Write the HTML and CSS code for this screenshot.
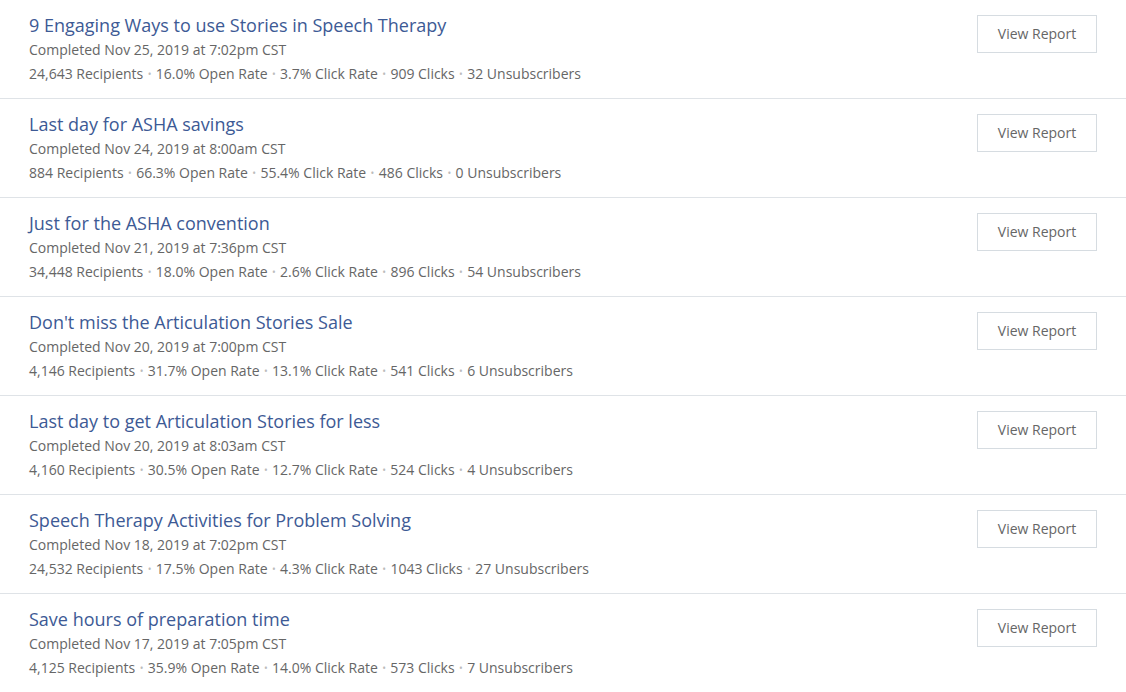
FILE: index.html
```html
<!DOCTYPE html>
<html>
<head>
<meta charset="utf-8">
<link rel="stylesheet" href="styles.css">
</head>
<body>
<ul class="list">
  <li class="row">
    <div class="info">
      <a class="title" href="#">9 Engaging Ways to use Stories in Speech Therapy</a>
      <div class="meta date">Completed Nov 25, 2019 at 7:02pm CST</div>
      <div class="meta stats"><span>24,643 Recipients</span><span class="dot">•</span><span>16.0% Open Rate</span><span class="dot">•</span><span>3.7% Click Rate</span><span class="dot">•</span><span>909 Clicks</span><span class="dot">•</span><span>32 Unsubscribers</span></div>
    </div>
    <button class="btn">View Report</button>
  </li>
  <li class="row">
    <div class="info">
      <a class="title" href="#">Last day for ASHA savings</a>
      <div class="meta date">Completed Nov 24, 2019 at 8:00am CST</div>
      <div class="meta stats"><span>884 Recipients</span><span class="dot">•</span><span>66.3% Open Rate</span><span class="dot">•</span><span>55.4% Click Rate</span><span class="dot">•</span><span>486 Clicks</span><span class="dot">•</span><span>0 Unsubscribers</span></div>
    </div>
    <button class="btn">View Report</button>
  </li>
  <li class="row">
    <div class="info">
      <a class="title" href="#">Just for the ASHA convention</a>
      <div class="meta date">Completed Nov 21, 2019 at 7:36pm CST</div>
      <div class="meta stats"><span>34,448 Recipients</span><span class="dot">•</span><span>18.0% Open Rate</span><span class="dot">•</span><span>2.6% Click Rate</span><span class="dot">•</span><span>896 Clicks</span><span class="dot">•</span><span>54 Unsubscribers</span></div>
    </div>
    <button class="btn">View Report</button>
  </li>
  <li class="row">
    <div class="info">
      <a class="title" href="#">Don't miss the Articulation Stories Sale</a>
      <div class="meta date">Completed Nov 20, 2019 at 7:00pm CST</div>
      <div class="meta stats"><span>4,146 Recipients</span><span class="dot">•</span><span>31.7% Open Rate</span><span class="dot">•</span><span>13.1% Click Rate</span><span class="dot">•</span><span>541 Clicks</span><span class="dot">•</span><span>6 Unsubscribers</span></div>
    </div>
    <button class="btn">View Report</button>
  </li>
  <li class="row">
    <div class="info">
      <a class="title" href="#">Last day to get Articulation Stories for less</a>
      <div class="meta date">Completed Nov 20, 2019 at 8:03am CST</div>
      <div class="meta stats"><span>4,160 Recipients</span><span class="dot">•</span><span>30.5% Open Rate</span><span class="dot">•</span><span>12.7% Click Rate</span><span class="dot">•</span><span>524 Clicks</span><span class="dot">•</span><span>4 Unsubscribers</span></div>
    </div>
    <button class="btn">View Report</button>
  </li>
  <li class="row">
    <div class="info">
      <a class="title" href="#">Speech Therapy Activities for Problem Solving</a>
      <div class="meta date">Completed Nov 18, 2019 at 7:02pm CST</div>
      <div class="meta stats"><span>24,532 Recipients</span><span class="dot">•</span><span>17.5% Open Rate</span><span class="dot">•</span><span>4.3% Click Rate</span><span class="dot">•</span><span>1043 Clicks</span><span class="dot">•</span><span>27 Unsubscribers</span></div>
    </div>
    <button class="btn">View Report</button>
  </li>
  <li class="row">
    <div class="info">
      <a class="title" href="#">Save hours of preparation time</a>
      <div class="meta date">Completed Nov 17, 2019 at 7:05pm CST</div>
      <div class="meta stats"><span>4,125 Recipients</span><span class="dot">•</span><span>35.9% Open Rate</span><span class="dot">•</span><span>14.0% Click Rate</span><span class="dot">•</span><span>573 Clicks</span><span class="dot">•</span><span>7 Unsubscribers</span></div>
    </div>
    <button class="btn">View Report</button>
  </li>
</ul>
</body>
</html>
```
FILE: styles.css
```css
html, body {
  margin: 0;
  padding: 0;
  background: #fff;
  font-family: "Open Sans", "Liberation Sans", sans-serif;
}
.list {
  list-style: none;
  margin: 0;
  padding: 0;
}
.row {
  display: flex;
  justify-content: space-between;
  align-items: flex-start;
  padding: 13px 29px 12px 29px;
  border-bottom: 1px solid #dfe3e7;
}
.info {
  display: flex;
  flex-direction: column;
}
.title {
  font-size: 18px;
  line-height: 24px;
  color: #3d5a95;
  text-decoration: none;
}
.meta {
  font-size: 14px;
  line-height: 24px;
  color: #666;
}
.date {
  margin-top: 1px;
}
.dot {
  color: #bbb;
  font-size: 10px;
  margin: 0 4.4px;
  vertical-align: 1px;
}
.btn {
  margin-top: 2px;
  width: 120px;
  height: 38px;
  background: #fff;
  border: 1px solid #d6dce1;
  border-radius: 0;
  font-family: "Open Sans", "Liberation Sans", sans-serif;
  font-size: 14px;
  color: #666;
  padding: 0 0 2px 0;
}
```
